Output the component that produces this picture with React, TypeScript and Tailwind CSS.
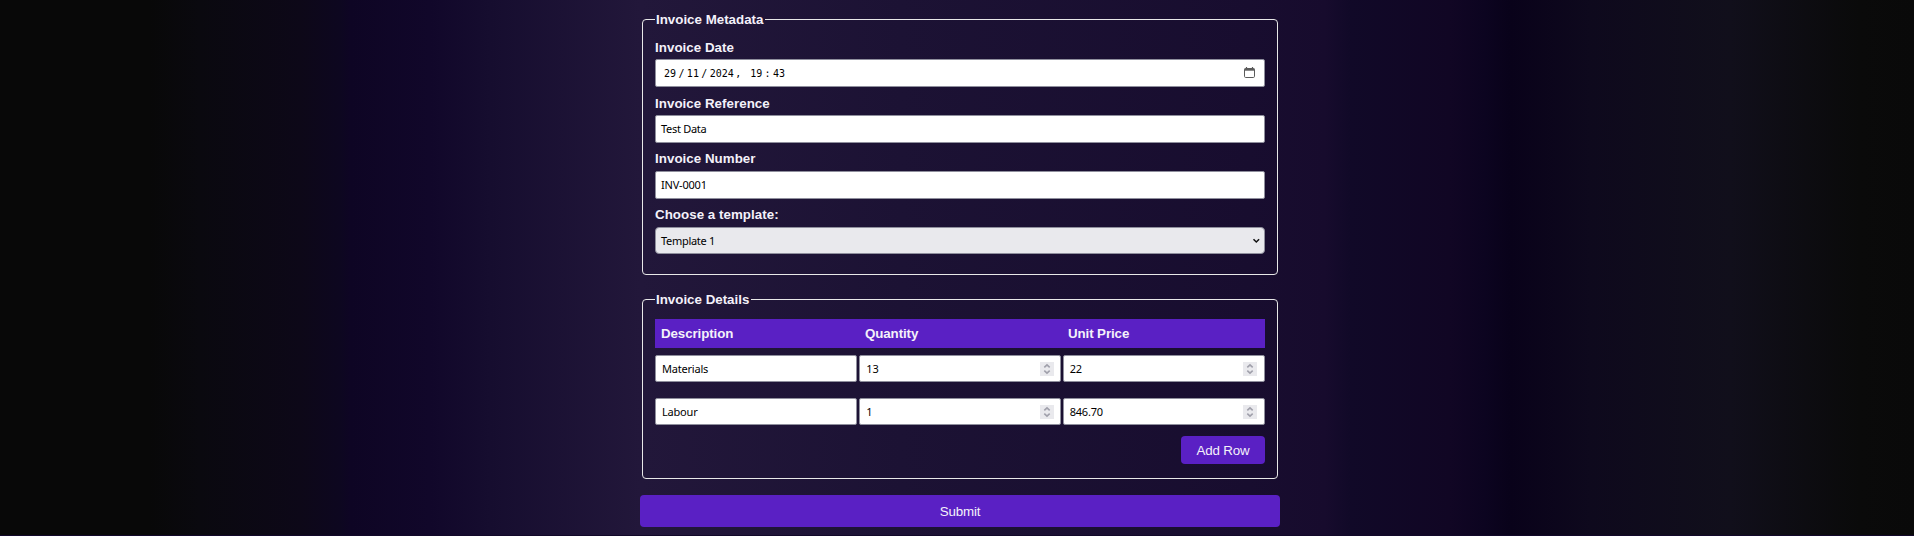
import type { ReactNode } from "react";

const label = "block h-[16px] text-[13.333px] leading-[18px] font-bold tracking-[0.04px] text-[#f4f1fa]";
const field =
  "flex items-center bg-white border border-[#8f8f9d] rounded-[2px] text-[11px] tracking-[-0.2px] text-black px-[5px] font-['Noto_Sans',sans-serif]";

function Panel({ title, className, children }: { title: string; className: string; children: ReactNode }) {
  return (
    <fieldset className={`mx-[2px] rounded-[4px] border border-[#e8e8e8] px-[12px] ${className}`}>
      <legend className="h-[16px] pr-[2px] pl-[1px] text-[13.333px] leading-[18px] font-bold text-[#f4f1fa]">{title}</legend>
      {children}
    </fieldset>
  );
}

function Spinner() {
  return (
    <svg className="ml-auto h-[14px] w-[14px] bg-[#e9e9ed]" viewBox="0 0 14 14" fill="none" stroke="#a0a0ab" strokeWidth="1.6">
      <path d="M4.3 5.4 7 2.9l2.7 2.5M4.3 8.6 7 11.1l2.7-2.5" />
    </svg>
  );
}

function Cell({ value, spin, className = "pr-[7px]" }: { value: string; spin?: boolean; className?: string }) {
  return (
    <div className={`${field} h-[27px] flex-1 pl-[6px] ${className}`}>
      <span className="pt-[1px]">{value}</span>
      {spin && <Spinner />}
    </div>
  );
}

export default function App() {
  return (
    <div className="h-[536px] overflow-hidden border-b border-[#12082a] bg-[linear-gradient(90deg,#080808_0px,#080808_150px,#0a090f_200px,#0d0818_300px,#0d0720_340px,#0e0524_350px,#11072a_430px,#160d2f_490px,#22173a_640px,#1c1234_900px,#180d2f_1250px,#170b2d_1325px,#110928_1350px,#110624_1450px,#0c0420_1485px,#09021a_1510px,#0e091d_1590px,#110f1b_1730px,#0a0a0a_1860px,#090909_1914px)] font-['Liberation_Sans',sans-serif]">
      <form className="mx-auto flex w-[640px] translate-x-[3px] flex-col">
        <Panel title="Invoice Metadata" className="mt-[11px] h-[264px]">
          <div className="mt-[12px]">
            <label className={label}>Invoice Date</label>
            <div className={`${field} mt-[4px] h-[28px]`}>
              <span className="ml-[3px] flex gap-[2.4px] font-['DejaVu_Sans_Mono',monospace] text-[10px] tracking-normal">
                <span>29</span>
                <span>/</span>
                <span>11</span>
                <span>/</span>
                <span>2024</span>
                <span className="-ml-px mr-[6.5px]">,</span>
                <span>19</span>
                <span>:</span>
                <span>43</span>
              </span>
              <svg className="mr-[4px] mb-[1px] ml-auto h-[11px] w-[11px]" viewBox="0 0 11 11" fill="none" stroke="#5b5b5b">
                <rect x=".5" y="1.5" width="10" height="9" rx="1.2" />
                <path d="M.5 2.6h10" strokeWidth="2.2" />
                <path d="M2.5 0v2M8.5 0v2" strokeWidth="1.2" />
              </svg>
            </div>
          </div>
          <div className="mt-[8px]">
            <label className={label}>Invoice Reference</label>
            <div className={`${field} mt-[4px] h-[28px]`}>
              <span className="tracking-[-0.3px]">Test Data</span>
            </div>
          </div>
          <div className="mt-[7px]">
            <label className={label}>Invoice Number</label>
            <div className={`${field} mt-[5px] h-[28px]`}>INV-0001</div>
          </div>
          <div className="mt-[7px]">
            <label className={label}>Choose a template:</label>
            <div className="mt-[5px] flex h-[27px] items-center rounded-[4px] border border-[#8f8f9d] bg-[#e9e9ed] pr-[4px] pl-[5px] font-['Noto_Sans',sans-serif] text-[11px] tracking-[-0.3px] text-black">
              <span className="pt-[1px]">Template 1</span>
              <svg className="ml-auto h-[6px] w-[8px]" viewBox="0 0 8 6" fill="none" stroke="#111" strokeWidth="1.5">
                <path d="m1.5 1.2 2.8 2.8 2.8-2.8" />
              </svg>
            </div>
          </div>
        </Panel>
        <Panel title="Invoice Details" className="mt-[16px] h-[188px]">
          <div className="mt-[12px] flex h-[29px] items-center bg-[#5a20c4] text-[13.333px] font-bold tracking-[-0.1px] text-[#f4f1fa]">
            <span className="w-[204px] pl-[6px]">Description</span>
            <span className="w-[203px] pl-[6px]">Quantity</span>
            <span className="pl-[6px]">Unit Price</span>
          </div>
          <div className="mt-[7px] flex gap-[2px]">
            <Cell value="Materials" />
            <Cell value="13" spin className="pr-[6px]" />
            <Cell value="22" spin />
          </div>
          <div className="mt-[16px] flex gap-[2px]">
            <Cell value="Labour" />
            <Cell value="1" spin className="pr-[6px]" />
            <Cell value="846.70" spin />
          </div>
          <button type="button" className="mt-[11px] ml-auto flex h-[28px] w-[84px] items-center justify-center rounded-[4px] bg-[#5a20c4] pt-[2px] text-[13.333px] tracking-[-0.15px] text-[#f4f1fa]">
            Add Row
          </button>
        </Panel>
        <button type="button" className="mt-[16px] h-[32px] rounded-[4px] bg-[#5a20c4] pt-[2px] text-[13.333px] tracking-[-0.15px] text-[#f4f1fa]">Submit</button>
      </form>
    </div>
  );
}
